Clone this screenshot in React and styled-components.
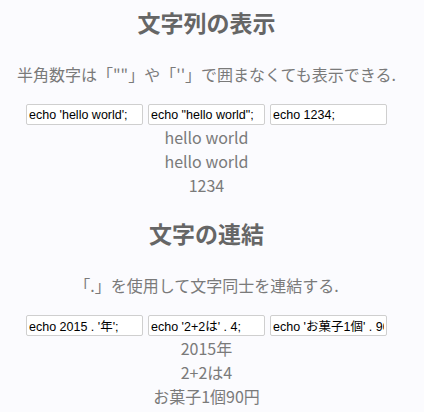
import React from 'react';
import styled, { createGlobalStyle } from 'styled-components';

const GlobalStyle = createGlobalStyle`
  html, body {
    margin: 0;
    padding: 0;
    background-color: #fbfbfe;
  }
  body {
    font-family: "Noto Sans CJK JP", "Noto Sans", sans-serif;
  }
`;

const Page = styled.div`
  width: 413px;
  display: flex;
  flex-direction: column;
  align-items: center;
`;

const Section = styled.section`
  display: flex;
  flex-direction: column;
  align-items: center;
  width: 100%;
  padding: 7px 0 14px;
`;

const Title = styled.h2`
  margin: 0;
  font-size: 23px;
  line-height: 30px;
  font-weight: bold;
  color: #666666;
`;

const Description = styled.p`
  margin: 25px 0 0;
  font-size: 16px;
  line-height: 24px;
  color: #7a7a7a;
`;

const CodeRow = styled.div`
  display: flex;
  gap: 5px;
  margin-top: 18px;
`;

const CodeInput = styled.input`
  box-sizing: border-box;
  width: 117px;
  height: 21px;
  padding: 0 2px;
  border: 1px solid #cfcfcf;
  border-radius: 2px;
  background: #ffffff;
  font-family: "Liberation Sans", "Noto Sans CJK JP", sans-serif;
  font-size: 12.5px;
  color: #000000;
  outline: none;
`;

const Results = styled.div`
  display: flex;
  flex-direction: column;
  align-items: center;
`;

const ResultLine = styled.div`
  font-size: 16px;
  line-height: 24px;
  color: #7a7a7a;
`;

const sections = [
  {
    title: '文字列の表示',
    text: '半角数字は「""」や「\'\'」で囲まなくても表示できる.',
    codes: ["echo 'hello world';", 'echo "hello world";', 'echo 1234;'],
    results: ['hello world', 'hello world', '1234'],
  },
  {
    title: '文字の連結',
    text: '「.」を使用して文字同士を連結する.',
    codes: ["echo 2015 . '年';", "echo '2+2は' . 4;", "echo 'お菓子1個' . 90 . '円';"],
    results: ['2015年', '2+2は4', 'お菓子1個90円'],
  },
];

export default function App() {
  return (
    <>
      <GlobalStyle />
      <Page>
        {sections.map((s) => (
          <Section key={s.title}>
            <Title>{s.title}</Title>
            <Description>{s.text}</Description>
            <CodeRow>
              {s.codes.map((c) => (
                <CodeInput key={c} type="text" value={c} readOnly />
              ))}
            </CodeRow>
            <Results>
              {s.results.map((r, i) => (
                <ResultLine key={i}>{r}</ResultLine>
              ))}
            </Results>
          </Section>
        ))}
      </Page>
    </>
  );
}
